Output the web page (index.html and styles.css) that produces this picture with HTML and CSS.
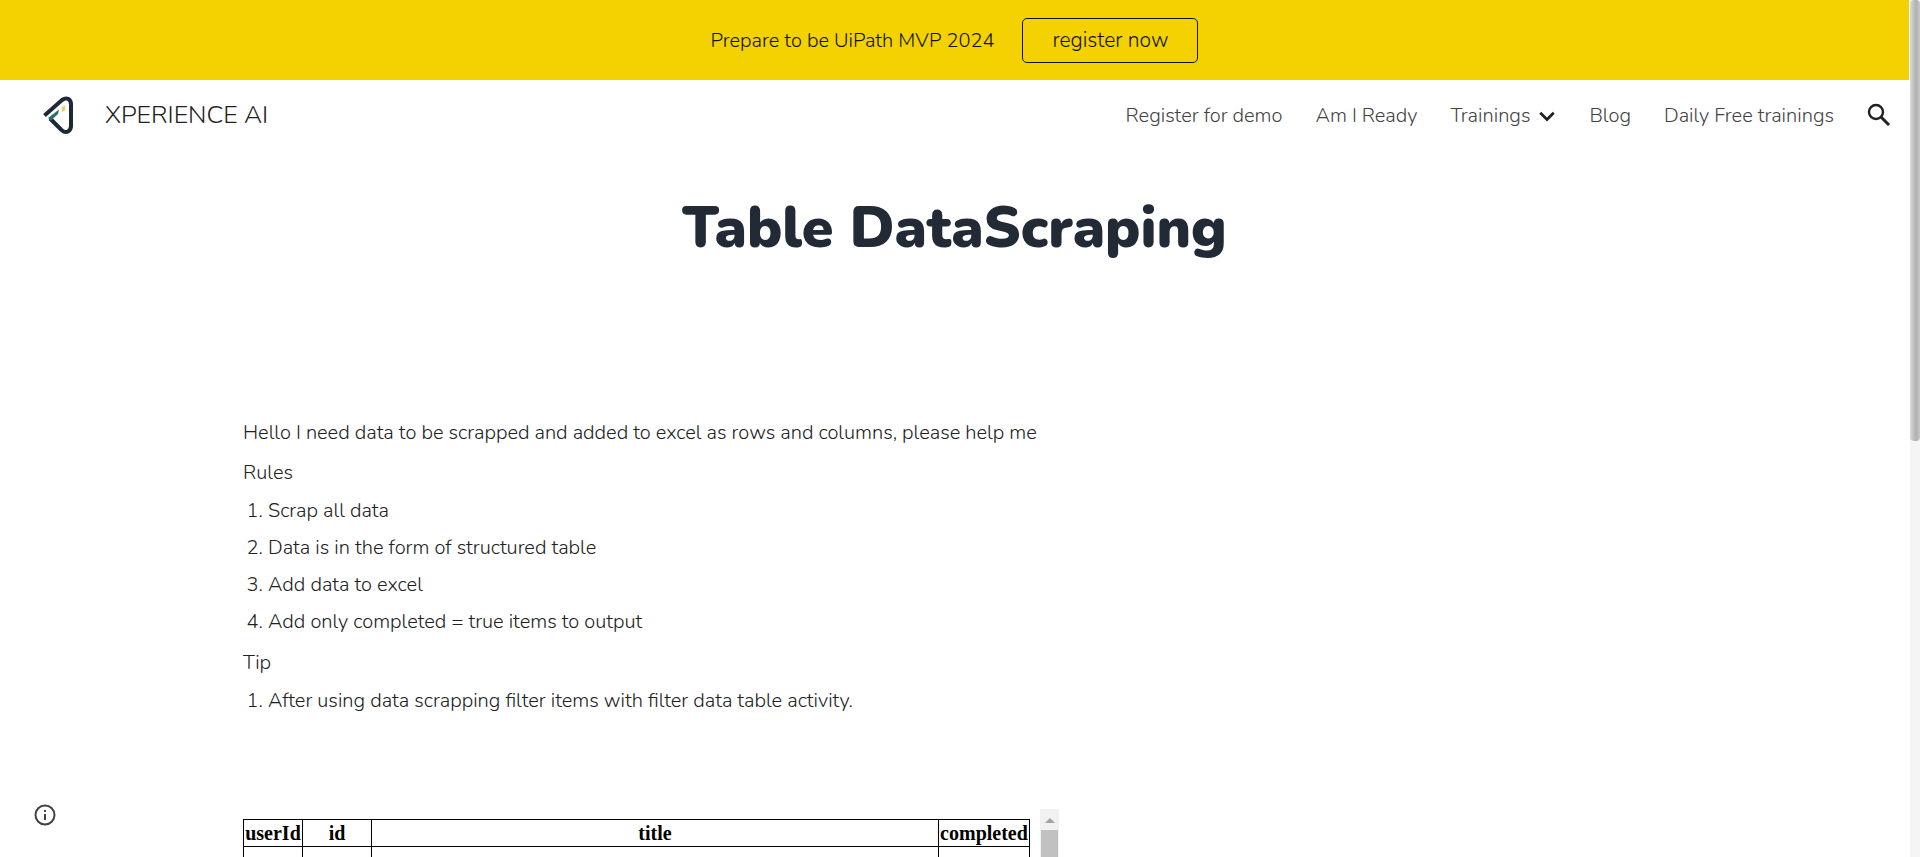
FILE: index.html
```
<!DOCTYPE html>
<html lang="en">
<head>
<meta charset="utf-8">
<title>XPERIENCE AI - Table DataScraping</title>
<link rel="stylesheet" href="styles.css">
</head>
<body>
<div class="page">
  <div class="banner">
    <span>Prepare to be UiPath MVP 2024</span>
    <a class="banner-button" href="#register">register now</a>
  </div>
  <header class="header">
    <a class="brand" href="#home">
      <svg class="logo" viewBox="0 0 34 40" aria-hidden="true">
        <path d="M4.500 20.500 22 5Q25.500 2.500 28.500 4 31 5.500 31 9.500V31Q31 35 28 36.500 25 38 21.500 35L10 23.500" fill="none" stroke="#1d2938" stroke-width="4"/>
        <path d="M8 23 19 14.500 18 19 11 25.500Z" fill="#28706f"/>
        <path d="M22 12 25 10.500V15.500L22 17Z" fill="#f0d35b"/>
      </svg>
      <span>XPERIENCE AI</span>
    </a>
    <nav class="nav">
      <a href="#demo">Register for demo</a>
      <a href="#ready">Am I Ready</a>
      <a class="nav-menu" href="#trainings">Trainings
        <svg class="chevron" viewBox="0 0 16 16" aria-hidden="true"><path d="m2 6 6 6 6-6" fill="none" stroke="#212121" stroke-width="2.500"/></svg>
      </a>
      <a href="#blog">Blog</a>
      <a href="#daily">Daily Free trainings</a>
      <button class="search" aria-label="Search">
        <svg viewBox="0 0 24 24" aria-hidden="true"><circle cx="9" cy="9" r="7" fill="none" stroke="#212121" stroke-width="2.400"/><path d="m14 14 8 8" stroke="#212121" stroke-width="3"/></svg>
      </button>
    </nav>
  </header>
  <main>
    <h1>Table DataScraping</h1>
    <section class="content">
      <p>Hello I need data to be scrapped and added to excel as rows and columns, please help me</p>
      <p>Rules</p>
      <ol>
        <li>Scrap all data</li>
        <li>Data is in the form of structured table</li>
        <li>Add data to excel</li>
        <li>Add only completed = true items to output</li>
      </ol>
      <p>Tip</p>
      <ol>
        <li>After using data scrapping filter items with filter data table activity.</li>
      </ol>
      <div class="frame">
        <table>
          <colgroup><col class="col-user"><col class="col-id"><col><col class="col-done"></colgroup>
          <thead><tr><th>userId</th><th>id</th><th>title</th><th>completed</th></tr></thead>
          <tbody><tr><td></td><td></td><td></td><td></td></tr></tbody>
        </table>
        <div class="frame-scroll">
          <svg viewBox="0 0 19 21" aria-hidden="true"><path d="M5 14 10 9l5 5Z" fill="#a3a3a3"/></svg>
          <div class="frame-thumb"></div>
        </div>
      </div>
    </section>
  </main>
</div>
<div class="scrollbar"><div class="thumb"></div></div>
<button class="info" aria-label="Site information">
  <svg viewBox="0 0 24 24" aria-hidden="true"><circle cx="12" cy="12" r="9.500" fill="none" stroke="#424242" stroke-width="2"/><path d="M12 11v6M12 7v2" stroke="#424242" stroke-width="2"/></svg>
</button>
</body>
</html>
```
FILE: styles.css
```
* { box-sizing: border-box; }

body {
  margin: 0;
  height: 100vh;
  overflow: hidden;
  display: flex;
  background: #fff;
  color: #212121;
  font-family: Nunito, Lato, sans-serif;
  font-size: 20px;
  font-weight: 350;
}

a { color: inherit; text-decoration: none; }

button {
  display: flex;
  padding: 0;
  border: 0;
  background: none;
}

.page { flex: 1; min-width: 0; }

.banner {
  height: 80px;
  display: flex;
  align-items: center;
  justify-content: center;
  gap: 28px;
  background: #f4d100;
  color: #111;
}

.banner-button {
  padding: 0 29px;
  border: 1px solid #111;
  border-radius: 5px;
  font-size: 21px;
  font-weight: 300;
  line-height: 43px;
}

.header {
  height: 70px;
  display: flex;
  align-items: center;
  justify-content: space-between;
  padding: 0 18px 0 40px;
}

.brand {
  display: flex;
  align-items: center;
  gap: 31px;
  font-size: 25px;
}

.logo { width: 34px; height: 40px; }

.nav {
  display: flex;
  align-items: center;
  gap: 33px;
  color: #424242;
}

.nav-menu { display: flex; align-items: center; gap: 8px; }
.chevron { width: 18px; height: 18px; }
.search svg { width: 24px; height: 24px; }

h1 {
  margin: 40px 0 0;
  color: #212a35;
  font-size: 57px;
  font-weight: 900;
  line-height: 76px;
  text-align: center;
}

.content { padding: 146px 243px 0; }

p { margin: 2px 0 0; line-height: 38px; }

ol {
  margin: 0;
  padding: 0 0 2px 25px;
  line-height: 37px;
}

.frame {
  width: 816px;
  max-width: 100%;
  margin-top: 88px;
  display: flex;
  align-items: flex-start;
  gap: 10px;
}

table {
  flex: 1;
  margin-top: 10px;
  border-collapse: collapse;
  table-layout: fixed;
  color: #000;
  font: 700 20px/24px "Liberation Serif", serif;
}

th, td { height: 27px; padding: 1px; border: 1px solid #000; }
.col-user { width: 59px; }
.col-id { width: 69px; }
.col-done { width: 91px; }

.frame-scroll {
  width: 19px;
  display: flex;
  flex-direction: column;
  background: #f1f1f1;
}

.frame-thumb { height: 80px; margin: 0 1px; background: #c1c1c1; }

.scrollbar { width: 11px; background: #f5f5f5; border-left: 1px solid #fff; }
.thumb {
  height: 441px;
  border-radius: 4px;
  background: linear-gradient(90deg, #dadada, #b0b0b0 60%, #c8c8c8);
}

.info { position: fixed; left: 33px; bottom: 30px; }
.info svg { width: 24px; height: 24px; }
```
